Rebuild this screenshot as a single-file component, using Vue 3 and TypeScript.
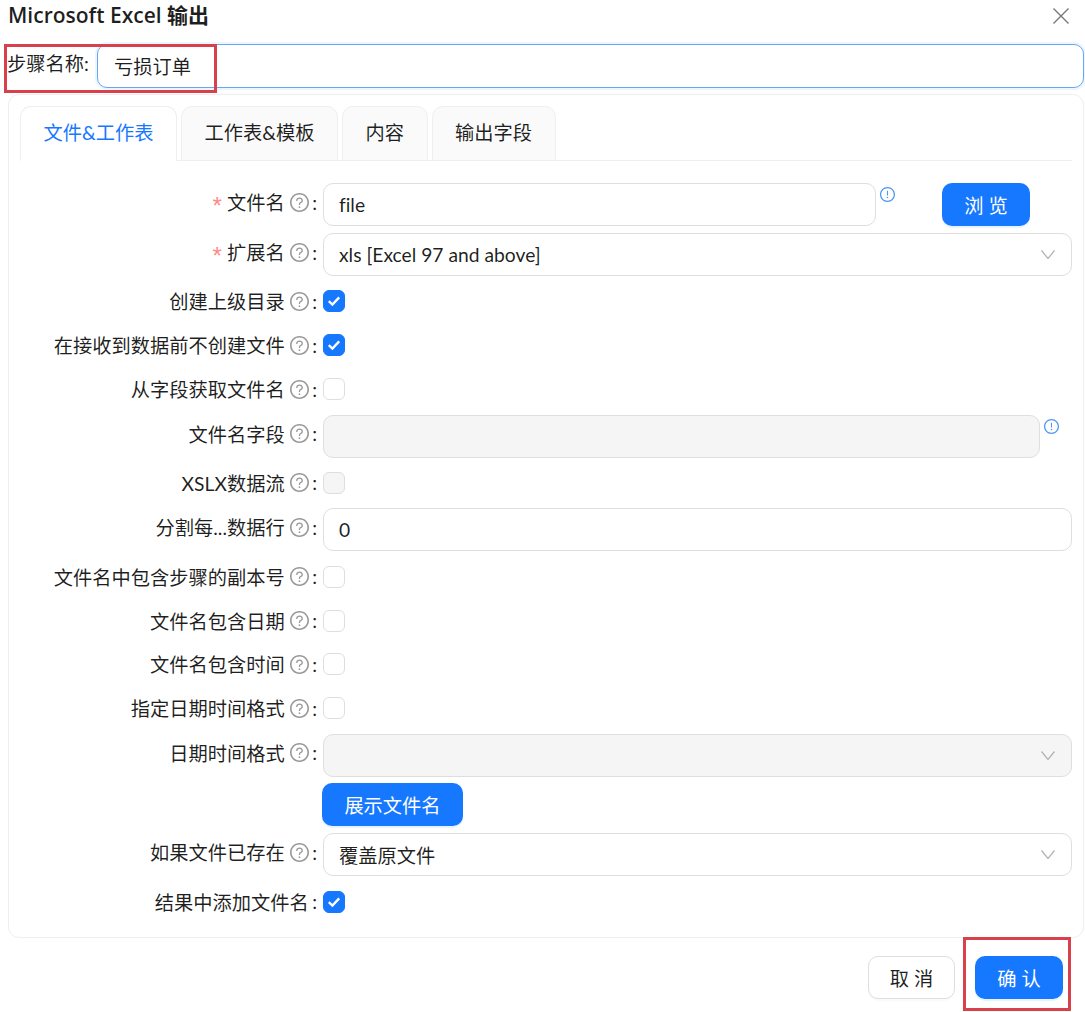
<template>
  <div class="dialog">
    <header class="title-row">
      <span class="title">Microsoft Excel 输出</span>
      <svg class="close" viewBox="0 0 16 16" width="16" height="16"><path d="M0.5 0.5 15.5 15.5M15.5 0.5 0.5 15.5" /></svg>
    </header>

    <div class="name-row">
      <label class="name-label">步骤名称:</label>
      <input class="name-input" value="亏损订单" readonly />
    </div>

    <section class="card">
      <div class="tabs">
        <div v-for="(t, i) in tabs" :key="t" class="tab" :class="{ active: i === 0 }">{{ t }}</div>
      </div>

      <div class="form">
        <div v-for="row in rows" :key="row.label" class="row" :class="{ 'row-check': row.type === 'check' }">
          <div class="label">
            <span v-if="row.required" class="star">*</span>
            <span>{{ row.label }}</span>
            <svg v-if="row.help !== false" class="help" viewBox="64 64 896 896" width="19" height="19">
              <path :d="circlePath" />
              <path d="M623.6 316.7C593.6 290.4 554 276 512 276s-81.6 14.5-111.6 40.7C369.2 344 352 380.7 352 420v7.6c0 4.4 3.6 8 8 8h48c4.4 0 8-3.6 8-8V420c0-44.1 43.1-80 96-80s96 35.9 96 80c0 31.1-22 59.6-56.1 72.7-21.2 8.1-39.2 22.3-52.1 40.9-13.1 19-19.9 41.8-19.9 64.9V620c0 4.4 3.6 8 8 8h48c4.4 0 8-3.6 8-8v-22.7a48.3 48.3 0 0 1 30.9-44.8c59-22.7 97.1-74.7 97.1-132.5.1-39.3-17.1-76-48.3-103.3z" />
              <path d="M472 732a40 40 0 1 0 80 0 40 40 0 1 0-80 0z" />
            </svg>
            <span class="colon">:</span>
          </div>

          <div class="control">
            <template v-if="row.type === 'check'">
              <span class="check" :class="{ on: row.checked, off: row.disabled }">
                <svg v-if="row.checked" viewBox="0 0 14 12" width="14" height="12"><path d="M1.8 6.2 5.4 9.6 12.2 2.4" /></svg>
              </span>
            </template>
            <template v-else-if="row.type === 'select'">
              <div class="box select" :class="{ off: row.disabled }">
                <span>{{ row.value }}</span>
                <svg class="chevron" viewBox="0 0 14 9" width="14" height="9"><path d="M0.5 0.5 7 8.5 13.5 0.5" /></svg>
              </div>
            </template>
            <template v-else>
              <div class="input-wrap" :style="{ width: row.width }">
                <div class="box" :class="{ off: row.disabled }">{{ row.value }}</div>
              </div>
              <svg v-if="row.info" class="info" viewBox="64 64 896 896" width="15" height="15">
                <path :d="circlePath" />
                <path d="M464 688a48 48 0 1 0 96 0 48 48 0 1 0-96 0zm24-112h48c4.4 0 8-3.6 8-8V296c0-4.4-3.6-8-8-8h-48c-4.4 0-8 3.6-8 8v272c0 4.4 3.6 8 8 8z" />
              </svg>
              <button v-if="row.browse" class="btn primary browse">浏 览</button>
            </template>
          </div>

          <button v-if="row.after" class="btn primary show-name">{{ row.after }}</button>
        </div>
      </div>
    </section>

    <footer class="footer">
      <button class="btn ghost">取 消</button>
      <button class="btn primary confirm">确 认</button>
    </footer>

    <!-- red annotation boxes drawn on top of the screenshot -->
    <div class="mark mark-name"></div>
    <div class="mark mark-ok"></div>
  </div>
</template>

<script setup lang="ts">
interface Row {
  label: string
  type: 'input' | 'select' | 'check'
  value?: string
  required?: boolean
  checked?: boolean
  disabled?: boolean
  info?: boolean
  browse?: boolean
  width?: string
  help?: boolean
  after?: string
}

const circlePath =
  'M512 64C264.6 64 64 264.6 64 512s200.6 448 448 448 448-200.6 448-448S759.4 64 512 64zm0 820c-205.4 0-372-166.6-372-372s166.6-372 372-372 372 166.6 372 372-166.6 372-372 372z'

const tabs = ['文件&工作表', '工作表&模板', '内容', '输出字段']

const rows: Row[] = [
  { label: '文件名', type: 'input', value: 'file', required: true, info: true, browse: true, width: '553px' },
  { label: '扩展名', type: 'select', value: 'xls [Excel 97 and above]', required: true },
  { label: '创建上级目录', type: 'check', checked: true },
  { label: '在接收到数据前不创建文件', type: 'check', checked: true },
  { label: '从字段获取文件名', type: 'check' },
  { label: '文件名字段', type: 'input', disabled: true, info: true, width: '717px' },
  { label: 'XSLX数据流', type: 'check', disabled: true },
  { label: '分割每...数据行', type: 'input', value: '0', width: '100%' },
  { label: '文件名中包含步骤的副本号', type: 'check' },
  { label: '文件名包含日期', type: 'check' },
  { label: '文件名包含时间', type: 'check' },
  { label: '指定日期时间格式', type: 'check' },
  { label: '日期时间格式', type: 'select', disabled: true, after: '展示文件名' },
  { label: '如果文件已存在', type: 'select', value: '覆盖原文件' },
  { label: '结果中添加文件名', type: 'check', checked: true, help: false },
]
</script>

<style>
html, body { margin: 0; background: #fff; }
</style>

<style scoped>
.dialog {
  position: relative;
  width: 1085px;
  height: 1012px;
  overflow: hidden;
  font-family: Lato, "Noto Sans CJK SC", sans-serif;
  font-size: 19.25px;
  font-variant-ligatures: none;
  color: rgba(0, 0, 0, 0.88);
}
.title-row { display: flex; justify-content: space-between; align-items: center; height: 30px; padding: 0 16px 0 8px; }
.title { font-family: "Open Sans", "Noto Sans CJK SC", sans-serif; font-size: 21px; font-weight: 600; margin-top: -3px; }
.close { stroke: #777; stroke-width: 1.4; fill: none; margin-top: 1px; }

.name-row { display: flex; align-items: center; height: 44px; margin-top: 14px; padding-left: 7px; }
.name-label { width: 90px; flex: none; margin-top: -6px; white-space: nowrap; }
.name-input {
  flex: 1;
  min-width: 0;
  height: 44px;
  box-sizing: border-box;
  margin-right: 1px;
  padding: 0 16px;
  border: 1.5px solid #69a5f5;
  border-radius: 10px;
  outline: none;
  box-shadow: 0 0 0 2px rgba(5, 145, 255, 0.08);
  font: inherit;
  color: inherit;
}

.card {
  box-sizing: border-box;
  width: 1076px;
  height: 844px;
  margin: 6px 0 0 8px;
  padding: 11px 11px 0;
  border: 1px solid #efefef;
  border-radius: 11px;
}
.tabs { display: flex; gap: 4px; height: 55px; box-sizing: border-box; border-bottom: 1px solid #efefef; }
.tab {
  box-sizing: border-box;
  height: 55px;
  padding: 0 22.5px 4px;
  display: flex;
  align-items: center;
  justify-content: center;
  background: #fafafa;
  border: 1.5px solid #efefef;
  border-radius: 11px 11px 0 0;
  white-space: nowrap;
}
.tab:nth-child(-n+2) { width: 157px; }
.tab.active { background: #fff; color: #1677ff; border-bottom-color: #fff; }

.form { display: flex; flex-direction: column; gap: 7px; margin-top: 22px; }
.row { display: grid; grid-template-columns: 303px 749px; align-items: center; }
.row-check { height: 36.85px; }
.label { display: flex; align-items: center; justify-content: flex-end; padding-right: 6px; white-space: nowrap; }
.row:not(.row-check) .label { grid-row: 1; align-self: start; height: 38px; }
.star { color: #ff8a85; margin-right: 5px; padding-top: 8px; font-size: 24px; line-height: 1; font-family: "Liberation Sans", sans-serif; }
.help { fill: #999; margin-left: 5px; }
.colon { margin-left: 3.5px; }
.control { display: flex; align-items: flex-start; min-width: 0; }
.input-wrap { flex: none; }

.box {
  box-sizing: border-box;
  height: 43px;
  padding: 0 15px;
  display: flex;
  align-items: center;
  background: #fff;
  border: 1.5px solid #dedede;
  border-radius: 10px;
}
.box.off { background: #f5f5f5; }
.select { flex: 1; justify-content: space-between; }
.chevron { fill: none; stroke: #b4b4b4; stroke-width: 1.3; margin-right: 1px; }

.check {
  box-sizing: border-box;
  width: 22px;
  height: 22px;
  display: flex;
  align-items: center;
  justify-content: center;
  background: #fff;
  border: 1.5px solid #dedede;
  border-radius: 6px;
}
.check.on { background: #1677ff; border-color: #1677ff; }
.check.off { background: #f5f5f5; }
.check svg { fill: none; stroke: #fff; stroke-width: 2.4; }

.info { fill: #4f96f3; flex: none; margin: 4px 0 0 4px; }
.btn {
  box-sizing: border-box;
  height: 43px;
  border-radius: 10px;
  border: none;
  font: inherit;
  cursor: pointer;
}
.primary { background: #1677ff; color: #fff; box-shadow: 0 2px 0 rgba(5, 145, 255, 0.1); }
.browse { width: 88px; margin-left: 47px; }
.show-name { grid-column: 2; justify-self: start; width: 141px; height: 43.6px; margin: 6px 0 0 -1px; }
.ghost { width: 87px; background: #fff; border: 1.5px solid #dedede; color: rgba(0, 0, 0, 0.88); box-shadow: 0 2px 0 rgba(0, 0, 0, 0.02); }
.confirm { width: 88px; }

.footer { display: flex; justify-content: flex-end; gap: 20px; margin-top: 18px; padding-right: 22px; }

.mark { position: absolute; box-sizing: border-box; border: 3px solid #d8414b; pointer-events: none; }
.mark-name { left: 4px; top: 44px; width: 213px; height: 49px; }
.mark-ok { left: 963px; top: 937px; width: 108px; height: 74px; }
</style>
